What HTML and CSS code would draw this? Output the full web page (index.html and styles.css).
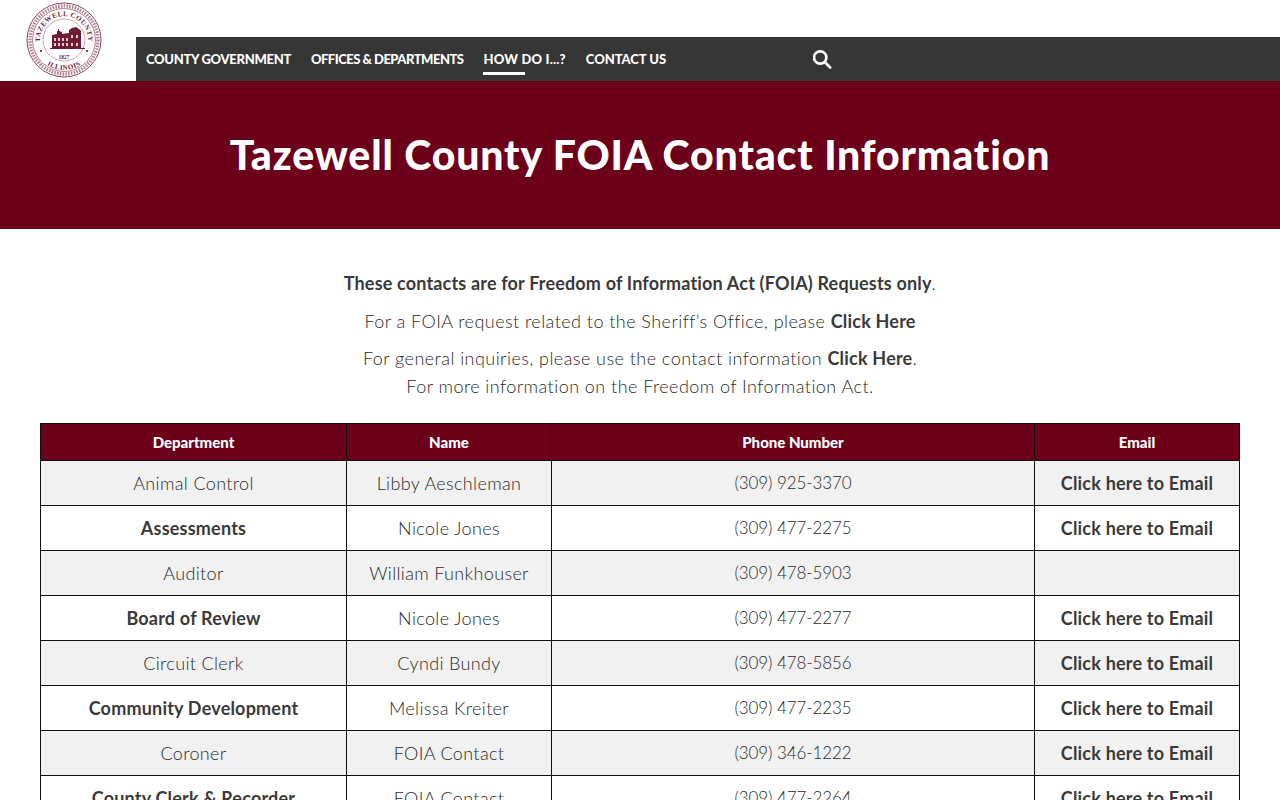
FILE: index.html
```html
<!DOCTYPE html>
<html lang="en">
<head>
<meta charset="utf-8">
<title>Tazewell County FOIA Contact Information</title>
<link rel="stylesheet" href="styles.css">
</head>
<body>
<header class="site-header">
  <a class="logo" href="#">
    <svg class="seal" viewBox="0 0 76 76" width="76" height="76">
      <defs>
        <path id="arc-top" d="M17.200 50A24 24 0 1 1 58.800 50"/>
        <path id="arc-bottom" d="M8 38a30 30 0 0 0 60 0"/>
      </defs>
      <circle cx="38" cy="38" r="37" fill="#fff" stroke="#8a4a5c" stroke-width="1"/>
      <circle cx="38" cy="38" r="34" fill="none" stroke="#b48592" stroke-width="3.400" stroke-dasharray="1.600 1.200"/>
      <circle cx="38" cy="38" r="31.500" fill="none" stroke="#8a4a5c" stroke-width=".7"/>
      <circle cx="38" cy="38" r="21" fill="none" stroke="#a66f7e" stroke-width=".6"/>
      <text class="seal-text"><textPath href="#arc-top" startOffset="50%" text-anchor="middle">TAZEWELL COUNTY</textPath></text>
      <text class="seal-text"><textPath href="#arc-bottom" startOffset="50%" text-anchor="middle">ILLINOIS</textPath></text>
      <text class="seal-year" x="38" y="56.500" text-anchor="middle">1827</text>
      <path d="M26 46V33l5-1v-3h1v-2h1v2l3 1v2l7-1v-3l3-2 4-1 3 2 2 2v17z" fill="#6f1a33"/>
      <path d="M28 36h2v3h-2zm4 0h2v3h-2zm4 0h2v3h-2zm4 0h2v3h-2zm5-3h2v3h-2zm5 0h2v3h-2zM28 41h2v3h-2zm4 0h2v3h-2zm4 0h2v3h-2zm4 0h2v3h-2zm5 0h2v3h-2zm5 0h2v3h-2z" fill="#e5c8d0"/>
      <path d="M24 46.500h35" stroke="#6f1a33" stroke-width="1.200"/>
      <circle cx="15" cy="49" r="1.100" fill="#6f1a33"/>
      <circle cx="61" cy="49" r="1.100" fill="#6f1a33"/>
    </svg>
  </a>
  <nav class="main-nav">
    <ul class="nav-list">
      <li><a href="#">County Government</a></li>
      <li><a class="nav-tight" href="#">Offices &amp; Departments</a></li>
      <li><a class="active" href="#">How Do I...?</a></li>
      <li><a class="nav-even" href="#">Contact Us</a></li>
    </ul>
    <svg class="search" viewBox="0 0 20 20" width="20" height="20" aria-label="Search">
      <circle cx="7.200" cy="8.500" r="6.200" fill="none" stroke="#fff" stroke-width="2.700"/>
      <path d="M11.700 13L17.200 18.500" stroke="#fff" stroke-width="2.600" stroke-linecap="round"/>
    </svg>
  </nav>
</header>
<section class="hero"><h1>Tazewell County FOIA Contact Information</h1></section>
<main class="content">
  <p class="intro"><strong>These contacts are for Freedom of Information Act (FOIA) Requests only</strong>.</p>
  <p class="intro intro-close">For a FOIA request related to the Sheriff’s Office, please <a href="#">Click Here</a></p>
  <p class="intro">For general inquiries, please use the contact information <a href="#">Click Here</a>.<br>For more information on the Freedom of Information Act.</p>
  <table class="contacts">
    <colgroup><col class="c1"><col class="c2"><col class="c3"><col class="c4"></colgroup>
    <thead><tr><th>Department</th><th>Name</th><th>Phone Number</th><th>Email</th></tr></thead>
    <tbody>
      <tr><td>Animal Control</td><td>Libby Aeschleman</td><td>(309) 925-3370</td><td><a href="#">Click here to Email</a></td></tr>
      <tr><td><a href="#">Assessments</a></td><td>Nicole Jones</td><td>(309) 477-2275</td><td><a href="#">Click here to Email</a></td></tr>
      <tr><td>Auditor</td><td>William Funkhouser</td><td>(309) 478-5903</td><td></td></tr>
      <tr><td><a href="#">Board of Review</a></td><td>Nicole Jones</td><td>(309) 477-2277</td><td><a href="#">Click here to Email</a></td></tr>
      <tr><td>Circuit Clerk</td><td>Cyndi Bundy</td><td>(309) 478-5856</td><td><a href="#">Click here to Email</a></td></tr>
      <tr><td><a href="#">Community Development</a></td><td>Melissa Kreiter</td><td>(309) 477-2235</td><td><a href="#">Click here to Email</a></td></tr>
      <tr><td>Coroner</td><td>FOIA Contact</td><td>(309) 346-1222</td><td><a href="#">Click here to Email</a></td></tr>
      <tr><td><a href="#">County Clerk &amp; Recorder</a></td><td>FOIA Contact</td><td>(309) 477-2264</td><td><a href="#">Click here to Email</a></td></tr>
    </tbody>
  </table>
</main>
</body>
</html>
```
FILE: styles.css
```css
* { box-sizing: border-box; }
html, body { margin: 0; padding: 0; }
body { font-family: "Lato", "Liberation Sans", sans-serif; font-variant-ligatures: none; color: #2a2a2a; background: #fff; font-size: 18px; }
a { color: inherit; text-decoration: none; }

.site-header { display: flex; height: 81px; background: #fff; }
.logo { flex: 0 0 136px; display: flex; justify-content: center; padding: 2px 8px 0 0; height: 81px; overflow: hidden; }
.seal { display: block; }
.seal-text { font: 700 7px "Liberation Serif", serif; fill: #6f1a33; letter-spacing: .5px; }
.seal-year { font: 700 5.5px "Liberation Serif", serif; fill: #6f1a33; }

.main-nav { flex: 1; margin-top: 37px; height: 44px; background: #363636; display: flex; align-items: center; padding-left: 10px; }
.nav-list { list-style: none; margin: 0; padding: 0; display: flex; gap: 20px; width: 667px; }
.nav-list a { display: block; color: #fff; font-size: 13px; font-weight: 900; letter-spacing: -.3px; text-transform: uppercase; line-height: 20px; padding: 2px 0 3px; }
.nav-list a.nav-tight { letter-spacing: -.5px; }
.nav-list a.nav-even { letter-spacing: -.05px; }
.nav-list a.active { position: relative; letter-spacing: .2px; }
.nav-list a.active::after { content: ""; position: absolute; left: 0; top: 25px; width: 42px; height: 3px; background: #fff; }
.search { display: block; }

.hero { height: 148px; background: #6c001b; display: flex; align-items: center; justify-content: center; }
.hero h1 { margin: 0; color: #fff; font-size: 41px; font-weight: 900; letter-spacing: .85px; line-height: 1.2; }

.content { padding: 40px 40px 40px; }
.intro { margin: 0 0 10px; text-align: center; font-size: 18px; font-weight: 300; letter-spacing: .45px; line-height: 28px; }
.intro-close { margin-bottom: 9px; }
.intro a, .contacts a, .intro strong { font-weight: 700; letter-spacing: .2px; color: #3a3a3a; }
.intro strong { letter-spacing: .17px; }

.contacts { width: 1199px; margin-top: 23px; border-collapse: collapse; table-layout: fixed; font-size: 18px; font-weight: 300; letter-spacing: .35px; }
.c1 { width: 306px; } .c2 { width: 205px; } .c3 { width: 483px; } .c4 { width: 205px; }
.contacts th, .contacts td { border: 1px solid #111; text-align: center; }
.contacts th { background: #6c001b; color: #fff; font-size: 15px; font-weight: 900; letter-spacing: 0; height: 37px; padding: 0 0 1px; }
.contacts td { height: 45px; padding: 0 10px 1px; }
.contacts td:nth-child(3) { font-size: 17px; letter-spacing: -.1px; }
.contacts tbody tr:nth-child(odd) { background: #f1f1f1; }
```
